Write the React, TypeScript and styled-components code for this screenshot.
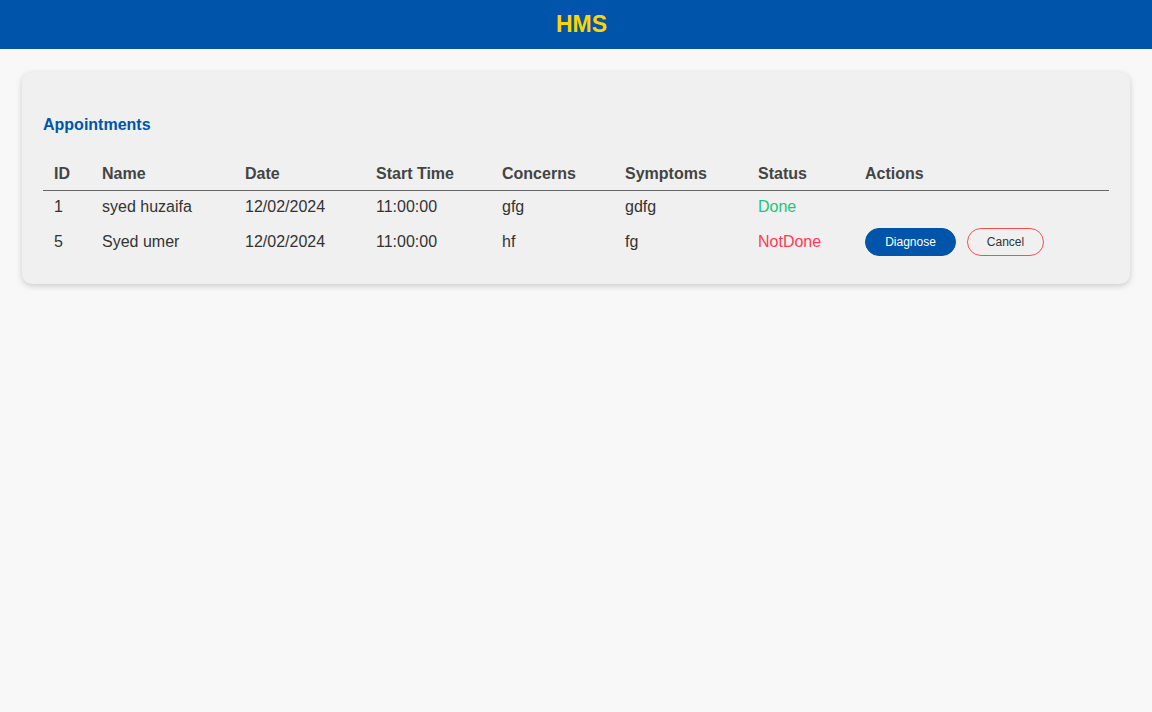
import React from "react";
import styled, { createGlobalStyle } from "styled-components";

const Global = createGlobalStyle`
  html, body { margin: 0; padding: 0; background: #f8f8f8; }
  body { font-family: "Liberation Sans", Arial, sans-serif; }
  * { box-sizing: border-box; }
`;

const TopBar = styled.header`
  height: 49px;
  background: #0055aa;
  display: flex;
  align-items: center;
  justify-content: center;
  padding-left: 11px;
`;

const Brand = styled.h1`
  margin: 0;
  color: #ffd500;
  font-size: 23px;
  font-weight: 700;
  line-height: 1;
`;

const Main = styled.main`
  padding: 23px 22px;
`;

const Card = styled.section`
  background: #f0f0f0;
  border-radius: 10px;
  box-shadow: 0 2px 6px rgba(0, 0, 0, 0.18);
  padding: 22px 21px 23px 21px;
`;

const Title = styled.h2`
  margin: 22px 0 22px;
  color: #0055aa;
  font-size: 16px;
  font-weight: 700;
  line-height: 18px;
`;

const Table = styled.table`
  width: 100%;
  border-collapse: collapse;
  table-layout: fixed;
  font-size: 16px;
`;

const Th = styled.th<{ $w?: number }>`
  text-align: left;
  font-weight: 700;
  color: #444;
  padding: 9px 11px 7px;
  line-height: 18px;
  border-bottom: 1px solid #666;
  width: ${(p) => (p.$w ? `${p.$w}px` : "auto")};
`;

const Td = styled.td<{ $status?: "done" | "notdone" }>`
  padding: 7px 11px 5px;
  line-height: 18px;
  color: ${(p) =>
    p.$status === "done" ? "#1ec37c" : p.$status === "notdone" ? "#ff3b4f" : "#333"};
  vertical-align: middle;
`;

const Actions = styled.div`
  display: flex;
  gap: 11px;
  align-items: center;
`;

const Pill = styled.button<{ $variant: "primary" | "outline" }>`
  height: 28px;
  border-radius: 14px;
  font-family: "Liberation Sans", Arial, sans-serif;
  font-size: 12px;
  padding: 0;
  cursor: pointer;
  width: ${(p) => (p.$variant === "primary" ? "91px" : "77px")};
  background: ${(p) => (p.$variant === "primary" ? "#0055aa" : "transparent")};
  color: ${(p) => (p.$variant === "primary" ? "#fff" : "#333")};
  border: 1px solid ${(p) => (p.$variant === "primary" ? "#0055aa" : "#ff4d4d")};
`;

type Row = {
  id: number;
  name: string;
  date: string;
  time: string;
  concerns: string;
  symptoms: string;
  status: "Done" | "NotDone";
};

const rows: Row[] = [
  { id: 1, name: "syed huzaifa", date: "12/02/2024", time: "11:00:00", concerns: "gfg", symptoms: "gdfg", status: "Done" },
  { id: 5, name: "Syed umer", date: "12/02/2024", time: "11:00:00", concerns: "hf", symptoms: "fg", status: "NotDone" },
];

const cols: [string, number | undefined][] = [
  ["ID", 48],
  ["Name", 143],
  ["Date", 131],
  ["Start Time", 126],
  ["Concerns", 123],
  ["Symptoms", 133],
  ["Status", 107],
  ["Actions", undefined],
];

export default function App() {
  return (
    <>
      <Global />
      <TopBar>
        <Brand>HMS</Brand>
      </TopBar>
      <Main>
        <Card>
          <Title>Appointments</Title>
          <Table>
            <thead>
              <tr>
                {cols.map(([c, w]) => (
                  <Th key={c} $w={w}>
                    {c}
                  </Th>
                ))}
              </tr>
            </thead>
            <tbody>
              {rows.map((r) => (
                <tr key={r.id}>
                  <Td>{r.id}</Td>
                  <Td>{r.name}</Td>
                  <Td>{r.date}</Td>
                  <Td>{r.time}</Td>
                  <Td>{r.concerns}</Td>
                  <Td>{r.symptoms}</Td>
                  <Td $status={r.status === "Done" ? "done" : "notdone"}>{r.status}</Td>
                  <Td>
                    {r.status === "NotDone" && (
                      <Actions>
                        <Pill $variant="primary">Diagnose</Pill>
                        <Pill $variant="outline">Cancel</Pill>
                      </Actions>
                    )}
                  </Td>
                </tr>
              ))}
            </tbody>
          </Table>
        </Card>
      </Main>
    </>
  );
}
